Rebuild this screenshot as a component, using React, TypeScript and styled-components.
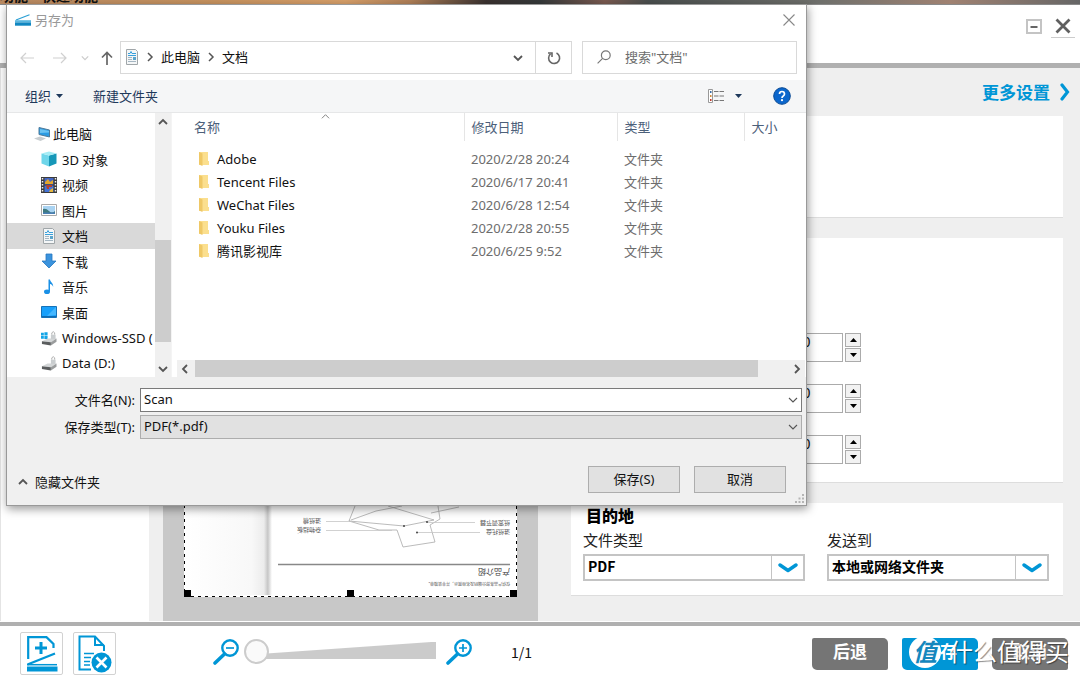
import React from 'react';
import styled, { createGlobalStyle } from 'styled-components';

const uiFont = '"Noto Sans", "Noto Sans CJK SC", sans-serif';
const cjkFont = '"Noto Sans CJK SC", "Noto Sans", sans-serif';
const blue = '#0096d6';

const GlobalStyle = createGlobalStyle`
  *, *::before, *::after { box-sizing: border-box; }
  body { margin: 0; background: #fff; font-family: ${uiFont}; font-size: 13px; color: #111; }
  button, input, select { font: inherit; color: inherit; margin: 0; padding: 0; border-radius: 0; }
  button { border: 0; background: none; cursor: pointer; }
  svg { display: block; flex: none; }
`;

/* ---------- scanner application ---------- */

const Shell = styled.div`
  position: relative;
  min-height: 100vh;
  display: flex;
  flex-direction: column;
  overflow: hidden;
`;

const DesktopStrip = styled.div`
  height: 5px;
  overflow: hidden;
  display: flex;
  align-items: flex-end;
  background: linear-gradient(90deg, #b98a62 0%, #c8935f 20%, #d8a06a 32%, #b08058 38%, #3a3230 45%, #35393a 50%, #7a5a50 56%, #4a4f4e 60%, #6f706c 76%, #a08272 88%, #666 100%);
  font: bold 14px/17px ${cjkFont};
  color: #111;
  border-bottom: 1px solid #8a8a8a;
`;

const WindowBar = styled.header`
  height: 63px;
  border-bottom: 5px solid #b0b0b0;
  background: #fff;
  display: flex;
  justify-content: flex-end;
  align-items: flex-start;
  gap: 5px;
  padding: 10px 5px 0 0;
`;

const WindowButton = styled.button<{ $underline?: boolean }>`
  width: 24px;
  height: 23px;
  display: grid;
  place-items: center;
  border-bottom: 1px solid ${p => (p.$underline ? '#ccc' : 'transparent')};
`;

const Main = styled.main`
  flex: 1;
  display: grid;
  grid-template-columns: 163px minmax(0, 375fr) minmax(0, 542fr);
  background: #efefef;
  border-bottom: 1px solid #fff;
`;

const ThumbPane = styled.aside`
  margin-right: 14px;
  border-left: 1px solid #e4e4e4;
  background: #fff;
`;

const PreviewPane = styled.section`
  background: #c8c8c8;
  display: flex;
  justify-content: center;
  align-items: flex-end;
  padding-bottom: 24px;
  overflow: hidden;
`;

const Settings = styled.section`
  display: flex;
  flex-direction: column;
  gap: 20px;
  padding: 0 17px 25px 33px;
`;

const MoreSettings = styled.a`
  align-self: flex-end;
  display: flex;
  align-items: center;
  gap: 10px;
  height: 48px;
  margin: 0 -7px -20px 0;
  color: ${blue};
  font: bold 17px/24px ${cjkFont};
  text-decoration: none;
`;

const Card = styled.div<{ $min: number }>`
  min-height: ${p => p.$min}px;
  background: #fff;
  border-bottom: 1px solid #ddd;
`;

const SpinnerCard = styled(Card)`
  display: flex;
  flex-direction: column;
  justify-content: flex-end;
  gap: 22px;
  padding: 0 0 18px 199px;
`;

const SpinnerRow = styled.div`
  display: flex;
  gap: 2px;
  height: 29px;
`;

const SpinnerInput = styled.input`
  width: 73px;
  border: 1px solid #ababab;
  background: #fff;
  text-align: center;
  font-size: 14px;
  padding-bottom: 12px;
  outline: 0;
`;

const SpinnerButtons = styled.div`
  display: flex;
  flex-direction: column;
  gap: 1px;
`;

const SpinnerButton = styled.button`
  width: 16px;
  flex: 1;
  display: grid;
  place-items: center;
  border: 1px solid #ababab;
  background: #f2f2f2;
`;

const DestinationCard = styled(Card)`
  padding: 0 14px 14px 12px;
`;

const CardTitle = styled.h2`
  margin: 0 0 1px;
  padding-left: 3px;
  font: 900 16px/24px ${cjkFont};
  color: #000;
`;

const FieldPair = styled.div`
  display: grid;
  grid-template-columns: 1fr 1fr;
  gap: 22px;
`;

const Field = styled.label`
  display: flex;
  flex-direction: column;
  gap: 2px;
  font: 15px/24px ${cjkFont};
  color: #222;
`;

const SelectBox = styled.span`
  display: grid;
  grid-template-columns: 1fr 32px;
  align-items: center;
  height: 27px;
  border: 2px solid #c4c4c4;
  & > select { grid-area: 1 / 1 / 2 / 3; }
  & > span { grid-area: 1 / 2; }
`;

const BlueSelect = styled.select`
  appearance: none;
  width: 100%;
  height: 23px;
  border: 0;
  background: #fff;
  padding: 0 0 3px 3px;
  font: bold 14px/20px ${cjkFont};
  color: #000;
  outline: 0;
`;

const SelectArrow = styled.span`
  height: 23px;
  border-left: 1px solid #c4c4c4;
  display: grid;
  place-items: center;
  pointer-events: none;
`;

const Footer = styled.footer`
  display: flex;
  align-items: center;
  height: 57px;
  border-top: 4px solid #b0b0b0;
  background: #fff;
  padding: 2px 12px 0 20px;
`;

const ToolButton = styled.button`
  width: 43px;
  height: 43px;
  display: grid;
  place-items: center;
  border: 1px solid #d2d2d2;
  border-radius: 2px;
  margin-right: 10px;
`;

const ZoomGroup = styled.div`
  display: flex;
  align-items: center;
  gap: 4px;
  margin: 0 38px 0 87px;
  padding-bottom: 5px;
`;

const ZoomButton = styled.button`
  width: 27px;
  height: 27px;
`;

const ZoomRange = styled.input`
  appearance: none;
  width: 192px;
  height: 26px;
  margin-right: 6px;
  background: linear-gradient(176deg, transparent 12px, #cbcbcb 13px) 8px 4px / 184px 17px no-repeat;
  &::-webkit-slider-thumb {
    appearance: none;
    width: 25px;
    height: 25px;
    border: 2px solid #ccc;
    border-radius: 50%;
    background: #fafafa;
  }
`;

const PageCount = styled.span`
  font: 14px/20px ${cjkFont};
  padding-bottom: 4px;
`;

const Actions = styled.div`
  margin-left: auto;
  display: flex;
  gap: 14px;
`;

const ActionButton = styled.button<{ $primary?: boolean }>`
  width: 76px;
  height: 32px;
  border-radius: 2px 5px 2px 5px;
  background: ${p => (p.$primary ? blue : '#757575')};
  color: #fff;
  font: bold 17px/24px ${cjkFont};
  padding-bottom: 5px;
`;

const Watermark = styled.div`
  position: absolute;
  right: 11px;
  bottom: 10px;
  display: flex;
  align-items: center;
  gap: 8px;
  color: #fff;
  font: 24px/32px ${cjkFont};
  text-shadow: 1px 1px 1px rgba(0, 0, 0, 0.45);
  pointer-events: none;
`;

const WatermarkBadge = styled.span`
  width: 32px;
  height: 32px;
  border-radius: 50%;
  background: #fff;
  color: #1587bd;
  font: bold italic 24px/30px ${cjkFont};
  text-align: center;
  text-shadow: none;
`;

const WatermarkText = styled.span`
  padding-bottom: 2px;
`;

/* ---------- save dialog ---------- */

const Dialog = styled.div`
  position: absolute;
  left: 6px;
  top: 4px;
  width: 801px;
  background: #fff;
  border: 1px solid #999;
  box-shadow: 1px 3px 9px rgba(0, 0, 0, 0.4);
`;

const DialogTitle = styled.div`
  display: flex;
  align-items: center;
  gap: 4px;
  height: 32px;
  padding: 0 11px 3px 8px;
  color: #999;
  & > button { margin-left: auto; }
`;

const NavRow = styled.div`
  display: flex;
  height: 43px;
  padding: 4px 9px 6px 0;
`;

const NavArrows = styled.div`
  display: flex;
  align-items: center;
  width: 113px;
  padding-left: 13px;
`;

const NavArrow = styled.button<{ $gap: number }>`
  margin-right: ${p => p.$gap}px;
`;

const AddressBox = styled.div`
  flex: 1;
  display: flex;
  align-items: center;
  border: 1px solid #d9d9d9;
  padding-left: 4px;
`;

const Crumb = styled.button<{ $width: number }>`
  width: ${p => p.$width}px;
  padding-bottom: 2px;
  text-align: left;
  color: #111;
`;

const AddressDrop = styled.button`
  margin-left: auto;
  padding-right: 12px;
`;

const RefreshButton = styled.button`
  align-self: stretch;
  width: 36px;
  display: grid;
  place-items: center;
  border-left: 1px solid #d9d9d9;
`;

const SearchBox = styled.label`
  width: 215px;
  margin-left: 10px;
  display: flex;
  align-items: center;
  gap: 14px;
  border: 1px solid #d9d9d9;
  padding: 0 0 2px 14px;
`;

const SearchInput = styled.input`
  min-width: 0;
  flex: 1;
  border: 0;
  outline: 0;
  background: none;
  &::placeholder { color: #6d6d6d; opacity: 1; }
`;

const Toolbar = styled.div`
  display: flex;
  align-items: center;
  height: 33px;
  background: #f5f6f7;
  border-bottom: 1px solid #e6e7e8;
  padding: 0 15px 1px 18px;
  color: #1e395b;
`;

const ToolbarButton = styled.button<{ $right?: number; $push?: boolean }>`
  display: flex;
  align-items: center;
  gap: 5px;
  margin-right: ${p => p.$right ?? 0}px;
  margin-left: ${p => (p.$push ? 'auto' : 0)};
`;

const Browser = styled.div`
  display: grid;
  grid-template-columns: 148px 16px 1fr;
  height: 264px;
`;

const Tree = styled.nav`
  display: flex;
  flex-direction: column;
  padding: 8px 0 1px;
  overflow: hidden;
`;

const TreeItem = styled.button<{ $root?: boolean; $active?: boolean }>`
  flex: 1;
  display: flex;
  align-items: center;
  gap: ${p => (p.$root ? 3 : 5)}px;
  padding-left: ${p => (p.$root ? 27 : 34)}px;
  white-space: nowrap;
  background: ${p => (p.$active ? '#d9d9d9' : 'transparent')};
`;

const VScroll = styled.div`
  display: flex;
  flex-direction: column;
  background: #f0f0f0;
`;

const VThumb = styled.div`
  flex: 1;
  margin-top: 110px;
  margin-bottom: 18px;
  background: #cdcdcd;
`;

const ScrollButton = styled.button`
  width: 16px;
  height: 17px;
  display: grid;
  place-items: center;
`;

const FilePane = styled.div`
  display: flex;
  flex-direction: column;
  min-width: 0;
  border-left: 1px solid #f4f4f4;
`;

const FileTable = styled.table`
  width: 100%;
  table-layout: fixed;
  border-collapse: collapse;
  text-align: left;
  white-space: nowrap;
`;

const HeadCell = styled.th<{ $first?: boolean; $last?: boolean }>`
  position: relative;
  height: 28px;
  padding: 0 0 2px ${p => (p.$first ? 22 : 7)}px;
  border-right: ${p => (p.$last ? '0' : '1px solid #e5e5e5')};
  font-weight: normal;
  color: #4c607a;
`;

const SortMark = styled.span`
  position: absolute;
  top: -1px;
  left: 51%;
`;

const Cell = styled.td`
  height: 23px;
  padding: 0 0 0 7px;
  color: #6d6d6d;
`;

const NameCell = styled(Cell)`
  padding-left: 26px;
  color: #111;
`;

const FileName = styled.span`
  display: flex;
  align-items: center;
  gap: 7px;
`;

const Spacer = styled.tr`
  height: 6px;
`;

const HScroll = styled.div`
  display: flex;
  height: 17px;
  margin: auto 1px 0 5px;
  background: #f0f0f0;
`;

const HThumb = styled.div`
  flex: 1;
  margin: 0 31px 0 2px;
  background: #cdcdcd;
`;

const SaveForm = styled.form`
  background: #f0f0f0;
  padding: 11px 4px 12px 0;
`;

const FormRow = styled.div`
  display: grid;
  grid-template-columns: 128px 1fr;
  gap: 5px;
  align-items: center;
  margin-bottom: 3px;
  & > label { text-align: right; padding-bottom: 2px; }
`;

const Combo = styled.span<{ $grey?: boolean }>`
  display: grid;
  grid-template-columns: 1fr 17px;
  align-items: center;
  height: 24px;
  border: 1px solid ${p => (p.$grey ? '#adadad' : '#7a7a7a')};
  background: ${p => (p.$grey ? '#e1e1e1' : '#fff')};
  & > :first-child { grid-area: 1 / 1 / 2 / 3; }
  & > :last-child { grid-area: 1 / 2; justify-self: center; pointer-events: none; }
`;

const ComboInput = styled.input`
  height: 22px;
  border: 0;
  outline: 0;
  background: transparent;
  padding: 0 0 2px 3px;
`;

const ComboSelect = styled.select`
  appearance: none;
  height: 22px;
  border: 0;
  outline: 0;
  background: transparent;
  padding: 0 0 2px 3px;
`;

const FormActions = styled.div`
  display: flex;
  align-items: center;
  gap: 14px;
  padding: 24px 16px 0 11px;
`;

const HideFolders = styled.button`
  display: flex;
  align-items: center;
  gap: 7px;
  margin-right: auto;
  padding-top: 4px;
`;

const DialogButton = styled.button`
  width: 92px;
  height: 27px;
  padding-bottom: 2px;
  border: 1px solid #adadad;
  background: #e1e1e1;
`;

const Grip = styled.svg`
  position: absolute;
  right: 1px;
  bottom: 1px;
`;

/* ---------- icons ---------- */

const Chevron = ({ dir, size = 10, color = '#555', w = 1.5 }: { dir: 'up' | 'down' | 'left' | 'right'; size?: number; color?: string; w?: number }) => {
  const d = { up: 'M1 7 5 3 9 7', down: 'M1 3 5 7 9 3', left: 'M7 1 3 5 7 9', right: 'M3 1 7 5 3 9' }[dir];
  return <svg width={size} height={size} viewBox="0 0 10 10" fill="none" stroke={color} strokeWidth={w}><path d={d} /></svg>;
};

const Caret = ({ up = false, color = '#1e395b' }: { up?: boolean; color?: string }) => (
  <svg width="7" height="4" viewBox="0 0 7 4" fill={color}><path d={up ? 'M0 4h7L3.5 0z' : 'M0 0h7L3.5 4z'} /></svg>
);

const Arrow = ({ dir, color }: { dir: 'left' | 'right' | 'up'; color: string }) => (
  <svg width="14" height="14" viewBox="0 0 14 14" fill="none" stroke={color} strokeWidth={dir === 'up' ? 1.7 : 1.2}>
    <path d={{ left: 'M14 7H1M6 2 1 7l5 5', right: 'M0 7h13M8 2l5 5-5 5', up: 'M7 14V1.5M2 6.5l5-5 5 5' }[dir]} />
  </svg>
);

const ScannerIcon = () => (
  <svg width="16" height="12" viewBox="0 0 16 12"><path d="M1 6 14.5.8" stroke="#2a9fd4" strokeWidth="1.2" /><path d="M0 6.2h16V8H0z" fill="#59b7e0" /><path d="M0 8.3h16V11.7H0z" fill="#1187c1" /></svg>
);

const DocIcon = ({ width = 16 }: { width?: number }) => (
  <svg width={width} height="16" viewBox={width === 16 ? '0 0 16 16' : '1 0 14 16'}>
    <path d="M2.5.5h9l2 2v13h-11z" fill="#f4f6f7" stroke="#a0a6a9" />
    <path d="M4 4.5h2l1-2 1 2h4M4 6.5h8" stroke="#38a0dc" fill="none" />
    <path d="M4 8.5h4M4 10.5h4M4 12.5h8" stroke="#a5b6c2" />
    <path d="M9 8h3v3H9z" fill="#5ba4cb" />
  </svg>
);

const PcIcon = () => (
  <svg width="16" height="16" viewBox="0 0 16 16"><path d="M5 1.5 15.5 4v7L5 8.5z" fill="#2b9be3" stroke="#4f7a99" /><path d="M6 3l9 2v1.5L6 7z" fill="#6cc3f2" /><path d="M0 12.5 6 10.5l6 2L6.5 15z" fill="#c8cdd0" /></svg>
);

const CubeIcon = () => (
  <svg width="16" height="16" viewBox="0 0 16 16"><path d="M.5 2.5 8 4.5v11L.5 12.5z" fill="#6fd6ea" /><path d="M15.5 2.5 8 4.5v11l7.5-3z" fill="#1697b8" /><path d="M8 .5l7.5 2L8 4.5.5 2.5z" fill="#a5ecf5" /></svg>
);

const FilmIcon = () => (
  <svg width="16" height="16" viewBox="0 0 16 16"><path d="M0 0h16v16H0z" fill="#3b3b3b" /><path d="M3.5 1h9v6.5h-9z" fill="#4467c4" /><path d="M3.5 8.5h9V15h-9z" fill="#4374d6" /><path d="M4 5l3-3 2 3 3-2v4H4z" fill="#e2a72c" /><path d="M5 8h6v2H8v2H6z" fill="#b4402e" /><path d="M9 13l3-2v4H8z" fill="#e6b73e" /><path d="M1.5 1v15M14.5 1v15" stroke="#eee" strokeWidth="1.5" strokeDasharray="1.5 1.5" /></svg>
);

const PhotoIcon = () => (
  <svg width="16" height="16" viewBox="0 0 16 16"><path d="M.5 2.5h15v11H.5z" fill="#fff" stroke="#aaa" /><path d="M2 4h12v8H2z" fill="#a9d3f2" /><path d="M2 7q3-1 6 2t6 0v3H2z" fill="#3f7a80" /><path d="M2 10.5h12V12H2z" fill="#4a7fb5" /></svg>
);

const DownloadIcon = () => (
  <svg width="16" height="16" viewBox="0 0 16 16"><path d="M5 1h6v7h4l-7 7-7-7h4z" fill="#3b93dd" stroke="#2677c0" strokeWidth=".8" /></svg>
);

const MusicIcon = () => (
  <svg width="16" height="16" viewBox="0 0 16 16" fill="#1a90e6"><path d="M7.5.5H9c.3 2.5 3.5 3.5 3.2 7.5-.6-1.8-1.7-2.7-3.2-3V12.5H7.5z" /><ellipse cx="6" cy="12.7" rx="3" ry="2.3" /></svg>
);

const DesktopIcon = () => (
  <svg width="16" height="16" viewBox="0 0 16 16"><path d="M.5 2.5h15v11H.5z" fill="#18a0fb" stroke="#1672b8" /><path d="M15 3v8L6 12z" fill="#45b7ff" /><path d="M1 12.5h14" stroke="#0f6bb3" /></svg>
);

const DiskIcon = ({ win = false }: { win?: boolean }) => (
  <svg width="16" height="16" viewBox="0 0 17 16">
    {win && <path d="M0 2.5h3V5H0zM3.6 2H7v3H3.6zM0 5.7h3v3H0zM3.6 5.7H7V9H3.6z" fill="#12a4e6" />}
    <path d="M1 11.5 7 8.5h9.5L10.5 12.5z" fill="#d3d6d7" /><path d="M1 11.5l9.5 1V16L1 14.5z" fill="#5a5d5e" /><path d="M10.5 12.5l6-4v3.5l-6 4z" fill="#9a9c9d" />
    <path d="M11.5 4.5v-2q1.5-2.5 3 0v2" fill="none" stroke="#aaa" /><path d="M10.5 4.5h5V9h-5z" fill="#c9cdcf" />
  </svg>
);

const FolderIcon = () => (
  <svg width="12" height="16" viewBox="0 0 12 16"><path d="M1 1h9v9h1v4H1z" fill="#fbdf8e" /><path d="M1 1l3.5 1.5V15L1 13.5z" fill="#efc866" /></svg>
);

const Magnifier = ({ plus = false }: { plus?: boolean }) => (
  <svg width="27" height="27" viewBox="0 0 27 27" fill="none" stroke={blue}>
    <circle cx="17" cy="10" r="7.7" strokeWidth="2.4" />
    <path d="M11.5 16 2 25" strokeWidth="3.6" strokeLinecap="round" />
    <path d={plus ? 'M13 10h8M17 6v8' : 'M13 10h8'} strokeWidth="1.7" />
  </svg>
);

const AddPageIcon = () => (
  <svg width="32" height="37" viewBox="0 0 32 37" fill="none" stroke={blue} strokeWidth="2.2">
    <path d="M2.2 24V2.2H20.5L27.5 9v4" /><path d="M15 7v12M9 13h12" strokeWidth="3" />
    <path d="M1.5 29.5 29 18.5" /><path d="M1 29.7h30" strokeWidth="1.5" /><path d="M1 34h30.5" strokeWidth="5" />
  </svg>
);

const DeletePageIcon = () => (
  <svg width="34" height="38" viewBox="0 0 34 38" fill="none" stroke={blue} strokeWidth="2">
    <path d="M13 34.5H1.5V1.5H17L26 11v5M17 1.5V10h9" /><path d="M6 18.5h10M6 22.5h7M6 26.5h6M6 30h6" strokeWidth="1.7" />
    <circle cx="23.5" cy="27.5" r="10" fill={blue} stroke="none" /><path d="M18.5 22.5l10 10M28.5 22.5l-10 10" stroke="#fff" strokeWidth="2.6" />
  </svg>
);

const ScanPreview = () => (
  <svg width="333" height="400" viewBox="184 197 333 400" role="img" aria-label="扫描预览">
    <defs>
      <linearGradient id="leftPage"><stop offset="0" stopColor="#fff" /><stop offset=".8" stopColor="#f8f8f8" /><stop offset=".95" stopColor="#ececec" /><stop offset="1" stopColor="#c4c4c4" /></linearGradient>
      <linearGradient id="rightPage"><stop offset="0" stopColor="#c9c9c9" /><stop offset="1" stopColor="#fff" /></linearGradient>
    </defs>
    <path d="M184 197h333v400H184z" fill="#fff" />
    <path d="M186 197h82v398h-82z" fill="url(#leftPage)" />
    <path d="M268 197h4v398h-4z" fill="url(#rightPage)" />
    <g fill="none" stroke="#aaa" strokeWidth=".8">
      <path d="M355 506l-6 15 30 9 18 0 6 17 32-5-5-17 10-6-2-13M351 520l25-9 26-5M388 506l46 14M349 521l55 5 30-6M431 513l28-6" />
      <path d="M326 521.5h26M326 530.5h66M417 532.5h63M427 522.5h48" stroke="#c5c5c5" />
    </g>
    <g fill="#444"><circle cx="404" cy="526" r="1" /><circle cx="427" cy="522" r="1" /><circle cx="417" cy="532.5" r="1" /></g>
    <path d="M278 564.5h232" stroke="#888" strokeWidth="1.5" />
    <g fontFamily='"Noto Sans CJK SC", sans-serif' fill="#555">
      <text transform="translate(321 519) rotate(180)" fontSize="6">进纸槽</text>
      <text transform="translate(321 528) rotate(180)" fontSize="6">杂物挡板</text>
      <text transform="translate(510 521) rotate(180)" fontSize="6">纸宽调节器</text>
      <text transform="translate(510 530) rotate(180)" fontSize="6">进纸托盘</text>
      <text transform="translate(510 569) rotate(180)" fontSize="8" fill="#333">产品介绍</text>
      <text transform="translate(510 582) rotate(180)" fontSize="4">仅供产品各部分编码及名称展示，并非装箱单。</text>
    </g>
    <path d="M184.5 197v399.5h332V197" fill="none" stroke="#fff" /><path d="M184.5 197v399.5h332V197" fill="none" stroke="#000" strokeDasharray="3 4" />
    <path d="M184 590h7v7h-7zM347 590h7v7h-7zM510 590h7v7h-7z" />
  </svg>
);

/* ---------- data ---------- */

const places = [
  { name: '此电脑', icon: <PcIcon />, root: true },
  { name: '3D 对象', icon: <CubeIcon /> },
  { name: '视频', icon: <FilmIcon /> },
  { name: '图片', icon: <PhotoIcon /> },
  { name: '文档', icon: <DocIcon />, active: true },
  { name: '下载', icon: <DownloadIcon /> },
  { name: '音乐', icon: <MusicIcon /> },
  { name: '桌面', icon: <DesktopIcon /> },
  { name: 'Windows-SSD (', icon: <DiskIcon win /> },
  { name: 'Data (D:)', icon: <DiskIcon /> },
];

const files = [
  ['Adobe', '2020/2/28 20:24'],
  ['Tencent Files', '2020/6/17 20:41'],
  ['WeChat Files', '2020/6/28 12:54'],
  ['Youku Files', '2020/2/28 20:55'],
  ['腾讯影视库', '2020/6/25 9:52'],
];

const Spinner = ({ label }: { label: string }) => (
  <SpinnerRow>
    <SpinnerInput aria-label={label} defaultValue="0" />
    <SpinnerButtons>
      <SpinnerButton aria-label="增加"><Caret up color="#000" /></SpinnerButton>
      <SpinnerButton aria-label="减少"><Caret color="#000" /></SpinnerButton>
    </SpinnerButtons>
  </SpinnerRow>
);

const LabeledSelect = ({ label, value }: { label: string; value: string }) => (
  <Field>
    {label}
    <SelectBox>
      <BlueSelect><option>{value}</option></BlueSelect>
      <SelectArrow>
        <svg width="20" height="10" viewBox="0 0 20 10" fill="none" stroke={blue} strokeWidth="3.4"><path d="M2 2 10 7.5 18 2" strokeLinecap="round" strokeLinejoin="round" /></svg>
      </SelectArrow>
    </SelectBox>
  </Field>
);

const SaveDialog = () => (
  <Dialog role="dialog" aria-label="另存为">
    <DialogTitle>
      <ScannerIcon />
      另存为
      <button aria-label="关闭"><svg width="12" height="12" viewBox="0 0 12 12" stroke="#888" strokeWidth="1.1"><path d="M.5.5l11 11M11.5.5l-11 11" /></svg></button>
    </DialogTitle>
    <NavRow>
      <NavArrows>
        <NavArrow $gap={19} aria-label="后退"><Arrow dir="left" color="#d0d0d0" /></NavArrow>
        <NavArrow $gap={14} aria-label="前进"><Arrow dir="right" color="#d0d0d0" /></NavArrow>
        <NavArrow $gap={11} aria-label="最近位置"><Chevron dir="down" size={8} color="#ccc" /></NavArrow>
        <NavArrow $gap={0} aria-label="上移"><Arrow dir="up" color="#666" /></NavArrow>
      </NavArrows>
      <AddressBox>
        <Crumb $width={20} aria-label="位置"><DocIcon width={14} /></Crumb>
        <Crumb $width={16} aria-label="展开"><Chevron dir="right" /></Crumb>
        <Crumb $width={45}>此电脑</Crumb>
        <Crumb $width={16} aria-label="展开"><Chevron dir="right" /></Crumb>
        <Crumb $width={40}>文档</Crumb>
        <AddressDrop aria-label="历史记录"><Chevron dir="down" w={1.8} /></AddressDrop>
        <RefreshButton aria-label="刷新">
          <svg width="14" height="14" viewBox="0 0 14 14" fill="none" stroke="#666" strokeWidth="1.6"><path d="M9.5 2A5.5 5.5 0 1 1 3.5 2.8" /><path d="M1 2h4v4" /></svg>
        </RefreshButton>
      </AddressBox>
      <SearchBox>
        <svg width="14" height="14" viewBox="0 0 14 14" fill="none" stroke="#777" strokeWidth="1.2"><circle cx="8.8" cy="5.2" r="4.4" /><path d="M5.6 8.4.6 13.4" /></svg>
        <SearchInput aria-label="搜索" placeholder={'搜索"文档"'} />
      </SearchBox>
    </NavRow>
    <Toolbar>
      <ToolbarButton $right={30}>组织<Caret /></ToolbarButton>
      <ToolbarButton>新建文件夹</ToolbarButton>
      <ToolbarButton $push $right={11} aria-label="视图">
        <svg width="16" height="14" viewBox="0 0 16 14"><path d="M.5.5h4v13h-4z" fill="#fff" stroke="#999" /><path d="M2 2h1.5v2H2z" fill="#3a6ea5" /><path d="M2 6h1.5v2H2z" fill="#d08a3a" /><path d="M2 10h1.5v2H2z" fill="#c0392b" /><path d="M6 2.5h10M6 7h10M6 11.5h10" stroke="#777" strokeDasharray="4.5 1" /></svg>
      </ToolbarButton>
      <ToolbarButton $right={31} aria-label="更多视图"><Caret /></ToolbarButton>
      <ToolbarButton aria-label="帮助">
        <svg width="18" height="18" viewBox="0 0 18 18"><circle cx="9" cy="9" r="8.3" fill="#0b66cc" stroke="#0a4a94" /><path d="M6.5 7q0-2.5 2.5-2.5T11.5 7Q11.5 8.3 10 9.2 9 9.8 9 11" fill="none" stroke="#fff" strokeWidth="1.7" /><circle cx="9" cy="13.2" r="1.1" fill="#fff" /></svg>
      </ToolbarButton>
    </Toolbar>
    <Browser>
      <Tree>
        {places.map(p => (
          <TreeItem key={p.name} $root={p.root} $active={p.active}>{p.icon}{p.name}</TreeItem>
        ))}
      </Tree>
      <VScroll>
        <ScrollButton aria-label="向上滚动"><Chevron dir="up" w={1.8} /></ScrollButton>
        <VThumb />
        <ScrollButton aria-label="向下滚动"><Chevron dir="down" w={1.8} /></ScrollButton>
      </VScroll>
      <FilePane>
        <FileTable>
          <colgroup><col width="292" /><col width="153" /><col width="127" /><col /></colgroup>
          <thead>
            <tr>
              <HeadCell $first>名称<SortMark><Chevron dir="up" size={9} color="#777" w={1} /></SortMark></HeadCell>
              <HeadCell>修改日期</HeadCell>
              <HeadCell>类型</HeadCell>
              <HeadCell $last>大小</HeadCell>
            </tr>
          </thead>
          <tbody>
            <Spacer />
            {files.map(([name, date]) => (
              <tr key={name}>
                <NameCell><FileName><FolderIcon />{name}</FileName></NameCell>
                <Cell>{date}</Cell>
                <Cell>文件夹</Cell>
                <Cell />
              </tr>
            ))}
          </tbody>
        </FileTable>
        <HScroll>
          <ScrollButton aria-label="向左滚动"><Chevron dir="left" w={1.8} /></ScrollButton>
          <HThumb />
          <ScrollButton aria-label="向右滚动"><Chevron dir="right" w={1.8} /></ScrollButton>
        </HScroll>
      </FilePane>
    </Browser>
    <SaveForm onSubmit={e => e.preventDefault()}>
      <FormRow>
        <label htmlFor="file-name">文件名(N):</label>
        <Combo><ComboInput id="file-name" defaultValue="Scan" /><Chevron dir="down" w={1.1} /></Combo>
      </FormRow>
      <FormRow>
        <label htmlFor="file-type">保存类型(T):</label>
        <Combo $grey><ComboSelect id="file-type"><option>PDF(*.pdf)</option></ComboSelect><Chevron dir="down" w={1.1} /></Combo>
      </FormRow>
      <FormActions>
        <HideFolders type="button"><Chevron dir="up" w={1.8} />隐藏文件夹</HideFolders>
        <DialogButton type="submit">保存(S)</DialogButton>
        <DialogButton type="button">取消</DialogButton>
      </FormActions>
    </SaveForm>
    <Grip width="10" height="10" viewBox="0 0 10 10" fill="#b5b5b5"><path d="M7 0h2v2H7zM7 3.5h2v2H7zM7 7h2v2H7zM3.5 3.5h2v2h-2zM3.5 7h2v2h-2zM0 7h2v2H0z" /></Grip>
  </Dialog>
);

export default function App() {
  return (
    <Shell>
      <GlobalStyle />
      <DesktopStrip>功能·快速功能</DesktopStrip>
      <WindowBar>
        <WindowButton aria-label="最小化">
          <svg width="16" height="15" viewBox="0 0 16 15" fill="none"><path d="M1 1h14v13H1z" stroke="#c4c4c4" strokeWidth="2" /><path d="M4.5 8h7" stroke="#666" strokeWidth="2" /></svg>
        </WindowButton>
        <WindowButton $underline aria-label="关闭">
          <svg width="16" height="16" viewBox="0 0 16 16" stroke="#606060" strokeWidth="2.8"><path d="M1.5 1.5l13 13M14.5 1.5l-13 13" /></svg>
        </WindowButton>
      </WindowBar>
      <Main>
        <ThumbPane />
        <PreviewPane><ScanPreview /></PreviewPane>
        <Settings>
          <MoreSettings href="#more">
            更多设置
            <svg width="10" height="18" viewBox="0 0 10 18" fill="none" stroke={blue} strokeWidth="3.2"><path d="M2 2 7.5 9 2 16" strokeLinecap="round" /></svg>
          </MoreSettings>
          <Card $min={102} />
          <SpinnerCard $min={245}>
            <Spinner label="亮度" />
            <Spinner label="对比度" />
            <Spinner label="锐度" />
          </SpinnerCard>
          <DestinationCard $min={93}>
            <CardTitle>目的地</CardTitle>
            <FieldPair>
              <LabeledSelect label="文件类型" value="PDF" />
              <LabeledSelect label="发送到" value="本地或网络文件夹" />
            </FieldPair>
          </DestinationCard>
        </Settings>
      </Main>
      <Footer>
        <ToolButton aria-label="添加页面"><AddPageIcon /></ToolButton>
        <ToolButton aria-label="删除页面"><DeletePageIcon /></ToolButton>
        <ZoomGroup>
          <ZoomButton aria-label="缩小"><Magnifier /></ZoomButton>
          <ZoomRange type="range" min="0" max="100" defaultValue="0" aria-label="缩放" />
          <ZoomButton aria-label="放大"><Magnifier plus /></ZoomButton>
        </ZoomGroup>
        <PageCount>1/1</PageCount>
        <Actions>
          <ActionButton>后退</ActionButton>
          <ActionButton $primary>保存</ActionButton>
          <ActionButton>取消</ActionButton>
        </Actions>
      </Footer>
      <SaveDialog />
      <Watermark><WatermarkBadge>值</WatermarkBadge><WatermarkText>什么值得买</WatermarkText></Watermark>
    </Shell>
  );
}
